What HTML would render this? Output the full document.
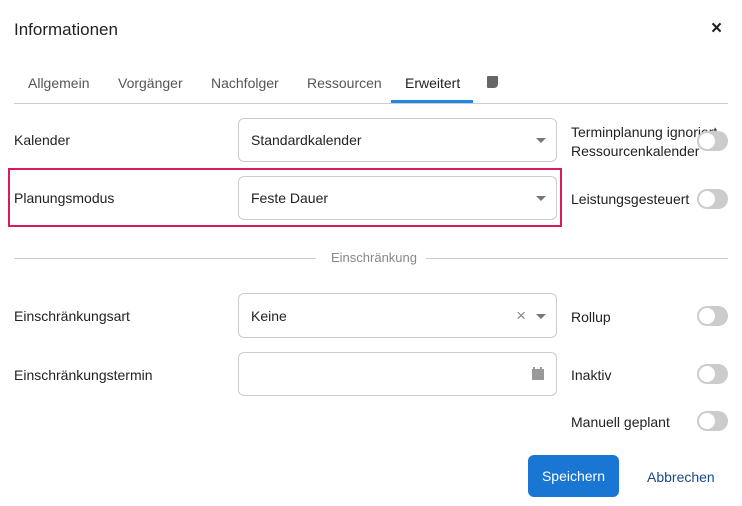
<!DOCTYPE html><html><head><style>
body{margin:0;width:742px;height:506px;background:#fff;font-family:"Liberation Sans",sans-serif;color:#222;position:relative;overflow:hidden;font-size:14px}
.a{position:absolute}
.inp{position:absolute;left:238px;width:319px;border:1px solid #ccc;border-radius:6px;box-sizing:border-box}
.inp span{position:absolute;left:12px;top:50%;transform:translateY(-50%)}
.car{position:absolute;right:10px;top:50%;margin-top:-2px;border-left:5px solid transparent;border-right:5px solid transparent;border-top:5px solid #777}
.tg{position:absolute;left:697px;width:31px;height:20px;border-radius:10px;background:#ccc}
.tg:after{content:"";position:absolute;left:2px;top:2px;width:16px;height:16px;border-radius:50%;background:#fff}
.tab{position:absolute;top:75px;color:#555}
</style></head><body>
<div class="a" style="left:14px;top:20px;font-size:17px">Informationen</div>
<div class="a" style="left:711px;top:18px;font-size:19px;font-weight:bold">×</div>
<div class="tab" style="left:28px">Allgemein</div>
<div class="tab" style="left:118px">Vorgänger</div>
<div class="tab" style="left:211px">Nachfolger</div>
<div class="tab" style="left:307px">Ressourcen</div>
<div class="tab" style="left:405px;color:#222">Erweitert</div>
<div class="a" style="left:487px;top:76px;width:11px;height:12px;background:#666;border-radius:1px 1px 4px 1px"></div>
<div class="a" style="left:14px;top:103px;width:714px;height:1px;background:#ccc"></div>
<div class="a" style="left:391px;top:100px;width:82px;height:3px;background:#1e88e5"></div>

<div class="a" style="left:14px;top:132px">Kalender</div>
<div class="inp" style="top:118px;height:44px"><span>Standardkalender</span><div class="car"></div></div>
<div class="a" style="left:571px;top:123px;line-height:19px">Terminplanung ignoriert<br>Ressourcenkalender</div>
<div class="tg" style="top:131px"></div>

<div class="a" style="left:8px;top:168px;width:550px;height:55px;border:2px solid #d81b60"></div>
<div class="a" style="left:14px;top:190px">Planungsmodus</div>
<div class="inp" style="top:176px;height:44px"><span>Feste Dauer</span><div class="car"></div></div>
<div class="a" style="left:571px;top:191px">Leistungsgesteuert</div>
<div class="tg" style="top:189px"></div>

<div class="a" style="left:14px;top:258px;width:302px;height:1px;background:#ccc"></div>
<div class="a" style="left:426px;top:258px;width:302px;height:1px;background:#ccc"></div>
<div class="a" style="left:331px;top:250px;font-size:13px;color:#888">Einschränkung</div>

<div class="a" style="left:14px;top:308px">Einschränkungsart</div>
<div class="inp" style="top:293px;height:45px"><span>Keine</span><div class="car"></div><div class="a" style="right:30px;top:12px;color:#888;font-size:17px">×</div></div>
<div class="a" style="left:571px;top:309px">Rollup</div>
<div class="tg" style="top:306px"></div>

<div class="a" style="left:14px;top:367px">Einschränkungstermin</div>
<div class="inp" style="top:352px;height:44px">
<div class="a" style="right:12px;top:16px;width:12px;height:11px;background:#999"></div>
<div class="a" style="right:21px;top:14px;width:2px;height:3px;background:#999"></div>
<div class="a" style="right:14px;top:14px;width:2px;height:3px;background:#999"></div>
</div>
<div class="a" style="left:571px;top:367px">Inaktiv</div>
<div class="tg" style="top:364px"></div>

<div class="a" style="left:571px;top:414px">Manuell geplant</div>
<div class="tg" style="top:411px"></div>

<div class="a" style="left:528px;top:455px;width:91px;height:42px;background:#1976d2;border-radius:6px;color:#fff;text-align:center;line-height:42px">Speichern</div>
<div class="a" style="left:647px;top:469px;color:#1a4a8a">Abbrechen</div>
</body></html>
